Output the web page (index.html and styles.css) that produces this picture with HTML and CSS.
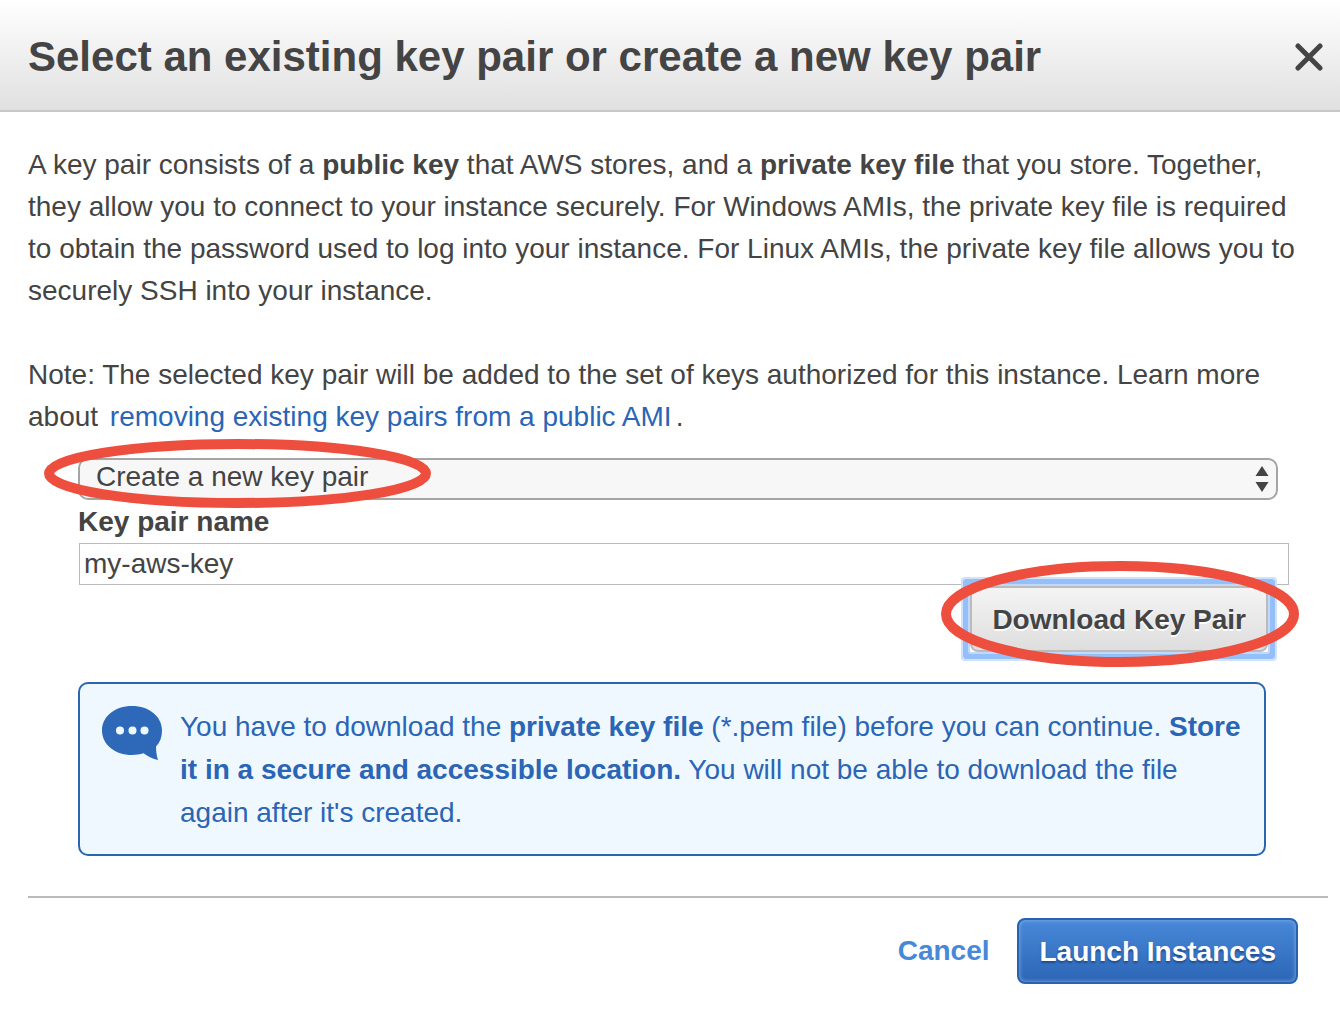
FILE: index.html
```html
<!DOCTYPE html>
<html lang="en">
<head>
<meta charset="utf-8">
<title>Select an existing key pair or create a new key pair</title>
<link rel="stylesheet" href="styles.css">
</head>
<body>
<main class="dialog">
  <header class="dialog-header">
    <h1>Select an existing key pair or create a new key pair</h1>
    <button class="close" type="button" aria-label="Close">
      <svg width="28" height="28" viewBox="0 0 28 28"><path d="M3 3 25 25M25 3 3 25"/></svg>
    </button>
  </header>
  <div class="dialog-body">
    <p>A key pair consists of a <b>public key</b> that AWS stores, and a <b>private key file</b> that you store. Together, they allow you to connect to your instance securely. For Windows AMIs, the private key file is required to obtain the password used to log into your instance. For Linux AMIs, the private key file allows you to securely SSH into your instance.</p>
    <p>Note: The selected key pair will be added to the set of keys authorized for this instance. Learn more about <a class="doc-link" href="#">removing existing key pairs from a public AMI</a>.</p>
    <form class="key-form">
      <div class="select-wrap">
        <select aria-label="Key pair option"><option>Create a new key pair</option></select>
        <svg class="arrows" width="14" height="26" viewBox="0 0 14 26"><path d="M7 0 13.500 10H.5zM7 26 .5 16H13.500z"/></svg>
        <svg class="mark mark-select" width="388" height="70" viewBox="0 0 388 70"><ellipse cx="193.500" cy="34.500" rx="188.500" ry="29.500"/></svg>
      </div>
      <label for="key-name">Key pair name</label>
      <input id="key-name" type="text" value="my-aws-key">
      <div class="download-wrap">
        <button class="download" type="button">Download Key Pair</button>
        <svg class="mark mark-download" width="358" height="106" viewBox="0 0 358 106"><ellipse cx="179" cy="53" rx="174" ry="48"/></svg>
      </div>
      <div class="notice">
        <svg class="bubble" width="62" height="56" viewBox="0 0 62 56"><path d="M31 1C14 1 1 11.500 1 25.500S14 50 31 50C35 50 39 49.500 42.500 48.300C47 51.500 52 54 57 55C55.500 50.500 55 45 55 41.500C59 37.500 61 32 61 25.500C61 11.500 48 1 31 1Z"/><circle cx="19" cy="25.500" r="4"/><circle cx="31.500" cy="25.500" r="4"/><circle cx="43.500" cy="25.500" r="4"/></svg>
        <p>You have to download the <b>private key file</b> (*.pem file) before you can continue. <b>Store it in a secure and accessible location.</b> You will not be able to download the file again after it's created.</p>
      </div>
    </form>
    <footer class="actions">
      <a class="cancel" href="#">Cancel</a>
      <button class="launch" type="button">Launch Instances</button>
    </footer>
  </div>
</main>
</body>
</html>
```
FILE: styles.css
```css
* { box-sizing: border-box; }

body {
  margin: 0;
  background: #fff;
  color: #444;
  font: 28px/42px "Liberation Sans", Arial, sans-serif;
}

button, select, input { font: inherit; color: inherit; margin: 0; }

p { margin: 0; }

a { text-decoration: none; }

.dialog-header {
  display: flex;
  align-items: center;
  justify-content: space-between;
  padding: 26px 17px 22px 28px;
  border-bottom: 2px solid #c8c8c8;
  background: linear-gradient(#fff, #e0e0e0);
}

h1 { margin: 0; font-size: 42px; line-height: 62px; }

.close {
  display: flex;
  padding: 0;
  border: 0;
  background: none;
}

.close path { stroke: #444; stroke-width: 5; stroke-linecap: round; }

.dialog-body { padding: 32px 12px 28px 28px; }

.dialog-body > p { padding-right: 12px; }

.dialog-body > p + p { margin-top: 42px; }

.doc-link { margin: 0 4px; color: #2a65b6; }

.key-form {
  display: flex;
  flex-direction: column;
  padding: 20px 0 0 50px;
}

.select-wrap { position: relative; margin-right: 50px; }

select {
  display: block;
  appearance: none;
  width: 100%;
  height: 42px;
  padding: 0 40px 4px 16px;
  border: 2px solid #a5a5a5;
  border-radius: 10px;
  background: #f7f7f7;
  line-height: 34px;
}

.arrows { position: absolute; right: 9px; top: 8px; fill: #444; }

.mark {
  position: absolute;
  fill: none;
  stroke: #ee4e3d;
  stroke-width: 10;
  pointer-events: none;
}

.mark-select { left: -34px; top: -19px; z-index: 1; }

.mark-download { right: -31px; top: -25px; }

label { font-weight: bold; line-height: 43px; }

input {
  height: 42px;
  margin: 0 39px 0 1px;
  padding: 0 4px;
  border: 1px solid #bbb;
  background: #fff;
}

.download-wrap {
  position: relative;
  align-self: flex-end;
  margin: 1px 60px 30px 0;
  border-radius: 1px;
  background: #fff;
  box-shadow: 0 0 0 2px #c0d8fa, 0 0 0 7px #94bff8, 0 0 0 9px #cfe1fb;
}

.download {
  display: block;
  padding: 11px 20px 9px;
  border: 2px solid #bbb;
  border-radius: 8px;
  background: linear-gradient(#f4f4f4, #dedede);
  font-weight: bold;
  text-shadow: 0 2px 0 #fff;
}

.notice {
  display: flex;
  gap: 17px;
  margin-right: 62px;
  padding: 21px 16px 20px 21px;
  border: 2px solid #2a65b0;
  border-radius: 10px;
  background: #f0f8ff;
  color: #2a65b6;
  line-height: 43px;
}

.bubble { flex: none; fill: #2d68b9; }

.bubble circle { fill: #f0f8ff; }

.actions {
  display: flex;
  align-items: center;
  justify-content: flex-end;
  gap: 28px;
  margin-top: 40px;
  padding: 20px 30px 0 0;
  border-top: 2px solid #bbb;
  font-weight: bold;
}

.cancel { color: #4888d8; }

.launch {
  padding: 11px 20px 9px;
  border: 2px solid #2863b2;
  border-radius: 8px;
  background: linear-gradient(#4888d8, #2c66b6);
  box-shadow: inset 0 0 4px #8ab4e6;
  color: #fff;
  font-weight: bold;
  text-shadow: 0 2px 2px #1f4c8c;
}
```
